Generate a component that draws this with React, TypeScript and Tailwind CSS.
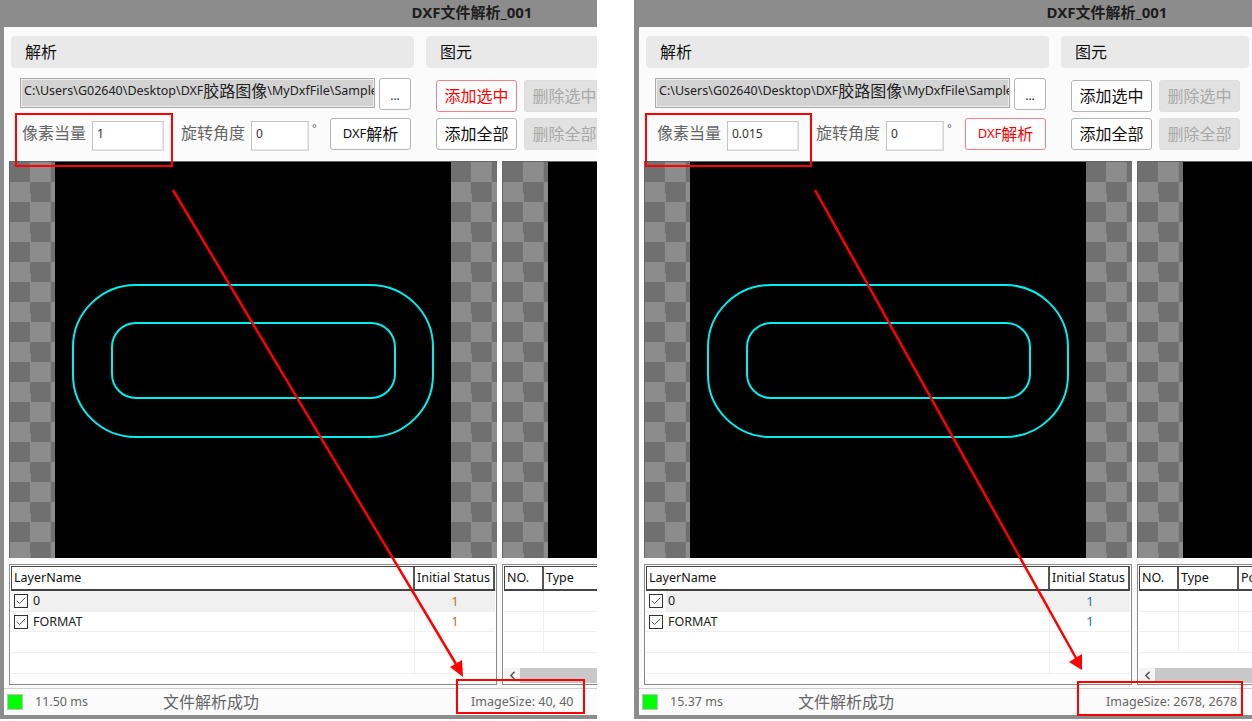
import { Check, ChevronLeft } from "lucide-react";

const LATIN = "font-['Noto_Sans','Noto_Sans_CJK_SC',sans-serif]";

type PaneProps = {
  left: number;
  width: number;
  edge: number;
  scale: string;
  ms: string;
  size: string;
  redAdd: boolean;
  statusColor: string;
};

function Cjk({ children }: { children: string }) {
  return <span className="text-[16px]">{children}</span>;
}

function ActionButton({ label, red, off }: { label: string; red?: boolean; off?: boolean }) {
  return (
    <div
      className={
        "flex h-8 w-[81px] shrink-0 items-center justify-center rounded-[3px] border text-[16px] " +
        (off
          ? "border-[#dedede] bg-[#e1e1e1] text-[#a9a9a9]"
          : red
            ? "border-[#f0808a] bg-white text-[#ff0000]"
            : "border-[#b4b4b4] bg-white text-[#111]")
      }
    >
      {label}
    </div>
  );
}

function ValueBox({ value, width }: { value: string; width: string }) {
  return (
    <div
      className={
        "flex h-[30px] items-center border border-[#c4c4c4] border-r-[#d8d8d8] border-b-[#d8d8d8] bg-white pb-1 pl-[4px] text-[12px] text-[#333] shadow-[inset_-1px_-1px_0_#e4e4e4] " +
        width
      }
    >
      {value}
    </div>
  );
}

function Checker({ width }: { width: string }) {
  return (
    <div
      className={
        "h-full shrink-0 bg-[conic-gradient(#8c8c8c_25%,#707070_0_50%,#8c8c8c_0_75%,#707070_0)] bg-[size:40.8px_40px] " +
        width
      }
    />
  );
}

function Header({ children, width }: { children: React.ReactNode; width: string }) {
  return (
    <div
      className={
        "flex h-full shrink-0 items-center border-r-2 border-[#555] pl-[2px] text-[12.5px] whitespace-nowrap text-[#111] " +
        width
      }
    >
      {children}
    </div>
  );
}

function Pane({ left, width, edge, scale, ms, size, redAdd, statusColor }: PaneProps) {
  const layers = ["0", "FORMAT", "", ""];
  return (
    <div
      className="absolute top-0 h-[719px] overflow-hidden bg-[#8c8c8c]"
      style={{ left, width, paddingLeft: edge }}
    >
      <div className="h-[27px] w-[936px] pb-1.5 text-center text-[15px] leading-[24px] font-bold text-[#1c1c1c]">
        DXF文件解析_001
      </div>

      <div className="flex h-[688px] w-[936px] flex-col bg-[#fbfbfb]">
        {/* top tools */}
        <div className="flex h-[134px] shrink-0 pt-[9px]">
          <div className="ml-[7px] w-[403px]">
            <div className="flex h-8 items-center rounded-sm bg-[#e9e9e9] pl-3.5 text-[16px] text-[#111]">解析</div>
            <div className="mt-2.5 ml-[9px] flex items-start gap-1">
              <div className="flex h-[30px] w-[355px] items-center overflow-hidden border border-[#aaa] bg-[#d3d3d3] pb-1 pl-[3px] text-[12.5px] whitespace-nowrap text-[#222] shadow-[inset_0_0_0_1px_#eee]">
                C:\Users\G02640\Desktop\DXF<Cjk>胶路图像</Cjk>\MyDxfFile\Sample
              </div>
              <div className="flex h-8 w-8 items-center justify-center rounded-[3px] border border-[#b4b4b4] bg-white pt-1 text-[12px] text-[#222]">
                ...
              </div>
            </div>
            <div className="mt-2 ml-[11px] flex h-8 items-start text-[16px] text-[#666]">
              <span className="mt-[3px] w-[70px]">像素当量</span>
              <div className="mt-[3px]">
                <ValueBox value={scale} width="w-[72px]" />
              </div>
              <span className="mt-[3px] ml-[17px] w-[70px]">旋转角度</span>
              <div className="mt-[3px]">
                <ValueBox value="0" width="w-[58px]" />
              </div>
              <span className="mt-0.5 ml-[3px] w-[18px] text-[11px]">°</span>
              <div
                className={
                  "flex h-8 w-[81px] items-center justify-center rounded-[3px] border bg-white text-[13px] " +
                  (redAdd ? "border-[#b4b4b4] text-[#111]" : "border-[#f0808a] text-[#ff0000]")
                }
              >
                DXF<Cjk>解析</Cjk>
              </div>
            </div>
          </div>

          <div className="ml-3 w-[188px]">
            <div className="flex h-8 items-center rounded-sm bg-[#e9e9e9] pl-3.5 text-[16px] text-[#111]">图元</div>
            <div className="mt-3 ml-2.5 flex gap-[7px]">
              <ActionButton label="添加选中" red={redAdd} />
              <ActionButton label="删除选中" off />
            </div>
            <div className="mt-1.5 ml-2.5 flex gap-[7px]">
              <ActionButton label="添加全部" />
              <ActionButton label="删除全部" off />
            </div>
          </div>
        </div>

        {/* image views */}
        <div className="ml-[5px] flex h-[397px] shrink-0 gap-[5px]">
          <div className="flex w-[488px] border-t border-l border-[#666] bg-black">
            <Checker width="w-[45px]" />
            <svg className="h-full flex-1" viewBox="0 0 396 396" fill="none" stroke="#00f0f0" strokeWidth="2">
              <rect x="18" y="123" width="360" height="152" rx="63" ry="62" />
              <rect x="57" y="161" width="283" height="75" rx="24" ry="24" />
            </svg>
            <Checker width="w-[46px]" />
          </div>
          <div className="flex w-[420px] border-t border-l border-[#666] bg-black">
            <Checker width="w-[45px]" />
          </div>
        </div>

        {/* tables */}
        <div className="mt-1.5 ml-[5px] flex h-[121px] shrink-0 gap-[5px]">
          <div className="w-[488px] border border-[#8a8a8a] bg-white p-px">
            <div className="flex h-[25px] border-t border-b-2 border-l border-[#444] bg-white">
              <Header width="w-[403px]">LayerName</Header>
              <Header width="w-[80px]">Initial Status</Header>
            </div>
            {layers.map((name, i) => (
              <div key={i} className="flex h-[20.7px] border-b border-[#eeeeee]">
                <div className="flex w-5 shrink-0 items-center justify-center">
                  {name && (
                    <div className="flex h-[14px] w-[14px] items-center justify-center border border-[#333]">
                      <Check size={12} strokeWidth={2} className="text-[#555]" />
                    </div>
                  )}
                </div>
                <div
                  className={
                    "flex w-[384px] shrink-0 items-center border-r border-[#eeeeee] pt-px pl-0.5 text-[12.5px] text-[#222] " +
                    (i === 0 ? "bg-[#f0f0f0]" : "")
                  }
                >
                  {name}
                </div>
                <div
                  className={
                    "flex flex-1 items-center justify-center pt-px text-[13px] " + (i === 0 ? "bg-[#f0f0f0]" : "")
                  }
                  style={{ color: statusColor }}
                >
                  {name && "1"}
                </div>
              </div>
            ))}
          </div>

          <div className="flex w-[420px] flex-col border border-[#8a8a8a] bg-white p-px">
            <div className="flex h-[25px] shrink-0 border-t border-b-2 border-l border-[#444] bg-white">
              <Header width="w-[39px]">NO.</Header>
              <Header width="w-[60px]">Type</Header>
              <Header width="w-[60px]">Pos</Header>
            </div>
            <div className="flex-1">
              {[0, 1, 2].map((r) => (
                <div key={r} className="flex h-[20.7px] border-b border-[#eeeeee]">
                  <div className="w-[40px] border-r border-[#eeeeee]" />
                  <div className="w-[60px] border-r border-[#eeeeee]" />
                  <div className="w-[60px] border-r border-[#eeeeee]" />
                </div>
              ))}
            </div>
            <div className="flex h-[15px] shrink-0 items-center bg-[#f4f4f4]">
              <div className="flex w-4 justify-center">
                <ChevronLeft size={13} strokeWidth={3} className="text-[#555]" />
              </div>
              <div className="h-full w-[300px] bg-[#c8c8c8]" />
            </div>
          </div>
        </div>

        {/* status bar */}
        <div className="mt-[3px] flex h-[27px] shrink-0 items-center border-t border-[#cfcfcf] text-[#666]">
          <div className="ml-[3px] h-4 w-4 border border-[#c0c0c0] bg-[#00ff00]" />
          <span className="ml-3 w-[128px] text-[12.5px]">{ms}</span>
          <span className="w-[308px] text-[16px]">文件解析成功</span>
          <span className="text-[12.5px]">{size}</span>
        </div>
      </div>
    </div>
  );
}

export default function App() {
  return (
    <div className={"relative h-[721px] w-[1252px] overflow-hidden bg-white " + LATIN}>
      <Pane
        left={0}
        width={597}
        edge={4}
        scale="1"
        ms="11.50 ms"
        size="ImageSize: 40, 40"
        redAdd
        statusColor="#b5792f"
      />
      <Pane
        left={634}
        width={618}
        edge={5}
        scale="0.015"
        ms="15.37 ms"
        size="ImageSize: 2678, 2678"
        redAdd={false}
        statusColor="#2f6fb0"
      />

      {/* red markup on top of the screenshots */}
      <div className="absolute top-[113px] left-[15px] h-[54px] w-[158px] border-2 border-[#ff0000]" />
      <div className="absolute top-[679px] left-[456px] h-[35px] w-[129px] border-2 border-[#ff0000]" />
      <div className="absolute top-[113px] left-[645px] h-[54px] w-[167px] border-2 border-[#ff0000]" />
      <div className="absolute top-[681px] left-[1077px] h-[35px] w-[166px] border-2 border-[#ff0000]" />
      <svg className="absolute top-0 left-0" width="1252" height="721" fill="#ff0000" stroke="#ff0000">
        <line x1="173" y1="190" x2="456" y2="664" strokeWidth="2.5" />
        <polygon points="463,677 450,667 462,660" strokeWidth="0" />
        <line x1="815" y1="190" x2="1076" y2="658" strokeWidth="2.5" />
        <polygon points="1082,670 1069,662 1082,654" strokeWidth="0" />
      </svg>
    </div>
  );
}
